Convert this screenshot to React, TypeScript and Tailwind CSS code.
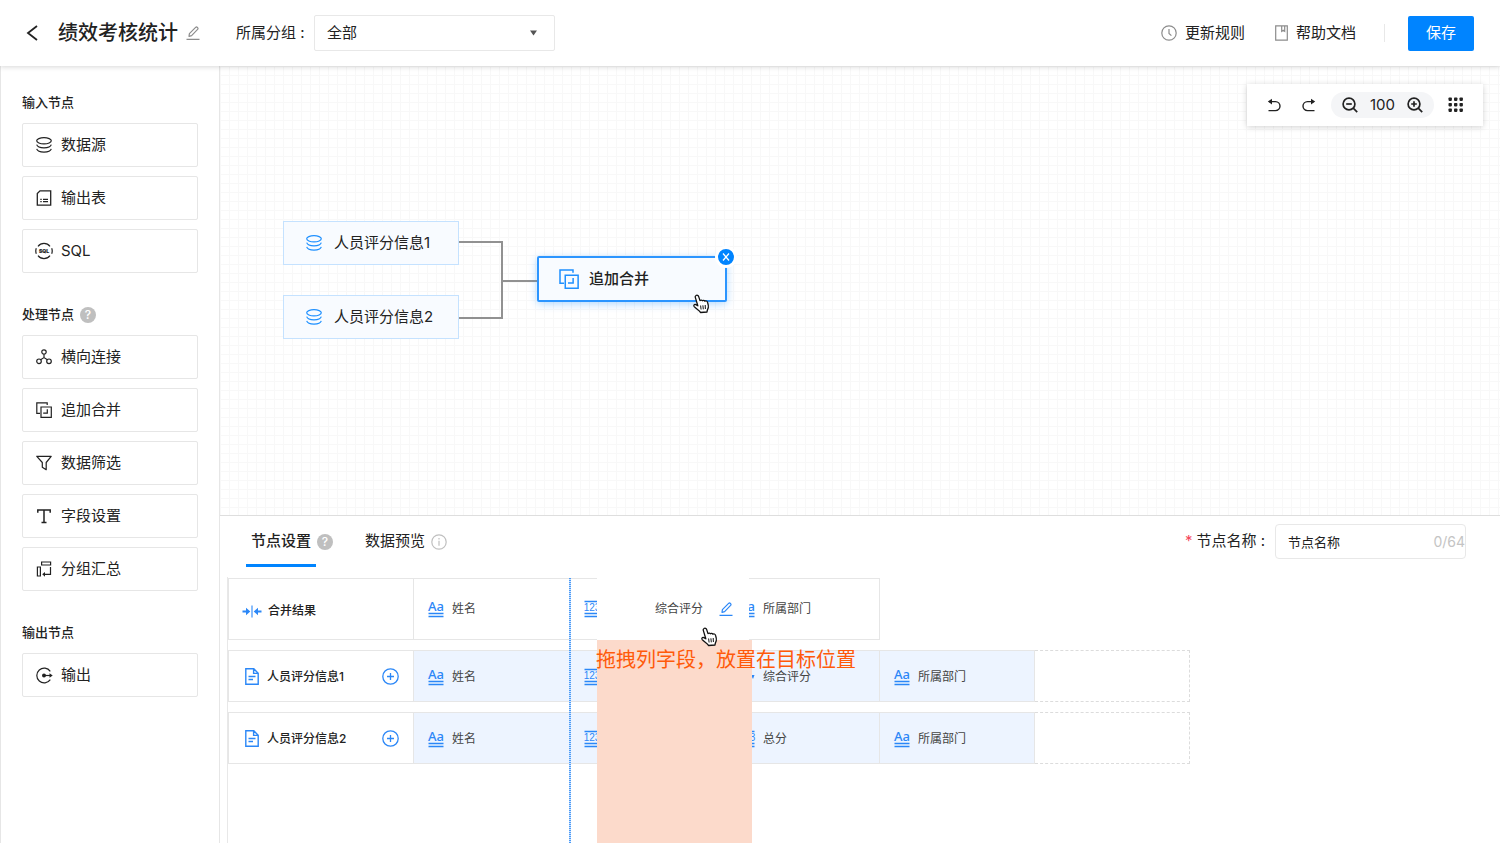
import React, { useState } from "react";

type IconProps = { className?: string };

const BackIcon = () => (
  <svg width="12" height="16" viewBox="0 0 12 16" fill="none" stroke="currentColor" strokeWidth="1.8">
    <path d="M11 1 2 8l9 7" />
  </svg>
);

const EditIcon: React.FC<IconProps> = ({ className }) => (
  <svg className={className} width="14" height="14" viewBox="0 0 14 14" fill="none" stroke="currentColor" strokeWidth="1.2">
    <path d="M.5 13.4h13M3 10.4l.4-2.8L9.6 1.4q.9-.8 1.8 0l.2.2q.8.9 0 1.8L5.6 9.7z" strokeLinejoin="round" />
  </svg>
);

const ClockIcon = () => (
  <svg width="16" height="16" viewBox="0 0 16 16" fill="none" stroke="#8c8c8c" strokeWidth="1.2">
    <circle cx="8" cy="8" r="7.2" />
    <path d="M8 4v4.4l2.4 2.2" />
  </svg>
);

const BookIcon = () => (
  <svg width="13" height="16" viewBox="0 0 13 16" fill="none" stroke="#8c8c8c" strokeWidth="1.2">
    <path d="M.7.8h11.6v14.4H.7zM6.7.8v5.600l1.500-1.100 1.500 1.100V.8" />
  </svg>
);

const DatabaseIcon = () => (
  <svg width="16" height="16" viewBox="0 0 16 16" fill="none" stroke="currentColor" strokeWidth="1.2">
    <ellipse cx="8" cy="3.8" rx="7.3" ry="3.1" />
    <path d="M.7 7.7c.6 2 3.6 3.2 7.3 3.2s6.7-1.2 7.3-3.2M.7 11.9c.6 2 3.6 3.2 7.3 3.2s6.700-1.200 7.300-3.200" />
  </svg>
);

const TableIcon = () => (
  <svg width="16" height="16" viewBox="0 0 16 16" fill="none" stroke="currentColor" strokeWidth="1.3">
    <path d="M4 .8h10.7v14.4H1.3V3.5zM4.300 9.300h1.400M7 9.300h5M4.300 11.600h1.400M7 11.600h5" />
  </svg>
);

const SqlIcon = () => (
  <svg width="18" height="18" viewBox="0 0 18 18" fill="none" stroke="currentColor" strokeWidth="1.2">
    <path d="M3 4.3a7.600 7.600 0 0 1 12 0M3 13.700a7.600 7.600 0 0 0 12 0M1.300 6.200a8 8 0 0 0 0 5.600M16.700 6.200a8 8 0 0 1 0 5.600" />
    <text x="9" y="11" textAnchor="middle" fontSize="5" fontWeight="800" fontFamily="Inter, sans-serif" fill="currentColor" strokeWidth="0.2">SQL</text>
  </svg>
);

const JoinIcon = () => (
  <svg width="16" height="16" viewBox="0 0 16 16" fill="none" stroke="currentColor" strokeWidth="1.2">
    <circle cx="8" cy="3" r="2.2" />
    <circle cx="3" cy="12.3" r="2.3" />
    <circle cx="13" cy="12.3" r="2.3" />
    <path d="M8 5.2v3.6M4.6 10.7 8 8.600l3.400 2.100" />
  </svg>
);

const MergeIcon: React.FC<{ size?: number }> = ({ size = 16 }) => (
  <svg width={size} height={size} viewBox="0 0 16 16" fill="none" stroke="currentColor" strokeWidth="1.2">
    <path d="M4 11.400H.8V.8h10.400V3" />
    <path d="M5 5h10.300v10.300H5z" />
    <path d="M11.300 7.200v4H7.200" />
  </svg>
);

const FilterIcon = () => (
  <svg width="16" height="16" viewBox="0 0 16 16" fill="none" stroke="currentColor" strokeWidth="1.2" strokeLinejoin="round">
    <path d="M.8 1.300h14.400L10.200 7.500v7.200l-3.900-2.500V7.500z" />
  </svg>
);

const FieldIcon = () => (
  <svg width="16" height="16" viewBox="0 0 16 16" fill="none" stroke="currentColor" strokeWidth="1.5">
    <path d="M1.800 4.700V1.900h12.400v2.800M8 1.900v12.600M5.500 14.500h5" />
  </svg>
);

const GroupIcon = () => (
  <svg width="16" height="16" viewBox="0 0 16 16" fill="none" stroke="currentColor" strokeWidth="1.2">
    <path d="M5.600 1h9v3h-9zM1.400 6h3v9h-3zM14.500 6v7.300H8" />
    <path d="m9 10.900-2.800 2.400L9 15.700z" fill="currentColor" stroke="none" />
  </svg>
);

const OutputIcon = () => (
  <svg width="17" height="17" viewBox="0 0 17 17" fill="none" stroke="currentColor" strokeWidth="1.2">
    <path d="M14.300 4.300a7.400 7.400 0 1 0 0 8.400" />
    <circle cx="8" cy="8.5" r="2" fill="currentColor" stroke="none" />
    <path d="M8 8.500h6" />
    <path d="m13.500 6.200 3.200 2.300-3.200 2.300z" fill="currentColor" stroke="none" />
  </svg>
);

const HelpIcon = () => (
  <span className="flex h-4 w-4 items-center justify-center rounded-full bg-[#bfbfbf] text-[12px] leading-4 font-medium text-white">?</span>
);

const InfoIcon = () => (
  <svg width="16" height="16" viewBox="0 0 16 16" fill="none" stroke="#bfbfbf" strokeWidth="1.2">
    <circle cx="8" cy="8" r="7.2" />
    <path d="M8 6.800v5M8 4v1.400" />
  </svg>
);

const UndoIcon: React.FC<IconProps> = ({ className }) => (
  <svg className={className} width="14" height="14" viewBox="0 0 14 14" fill="none" stroke="currentColor" strokeWidth="1.4">
    <path d="M2 3.600h6.500a4.500 4.500 0 0 1 0 9H1.500" />
    <path d="M5 .8v5.600L.8 3.600z" fill="currentColor" stroke="none" />
  </svg>
);

const ZoomIcon: React.FC<{ plus?: boolean }> = ({ plus }) => (
  <svg width="16" height="16" viewBox="0 0 16 16" fill="none" stroke="currentColor" strokeWidth="1.7">
    <circle cx="7" cy="7" r="5.9" />
    <path d={plus ? "M4.2 7h5.600M7 4.200v5.600" : "M4.200 7h5.600"} />
    <path d="m11.200 11.200 4 4" />
  </svg>
);

const DotsIcon = () => (
  <svg width="16" height="16" viewBox="0 0 16 16" fill="currentColor">
    {[0.5, 6, 11.5].map((y) => [0.5, 6, 11.5].map((x) => <rect key={`${x}-${y}`} x={x} y={y} width="3.4" height="3.4" rx="0.8" />))}
  </svg>
);

const MergeResultIcon = () => (
  <svg width="20" height="13" viewBox="0 0 20 13" fill="none" stroke="currentColor" strokeWidth="2">
    <path d="M.5 6.500h5M14.500 6.500h5" />
    <path d="M10 .5v12" strokeWidth="1.1" />
    <path d="M4 2.800 8.300 6.500 4 10.200zM16 2.800 11.700 6.500l4.300 3.700z" fill="currentColor" stroke="none" />
  </svg>
);

const FileIcon = () => (
  <svg width="14" height="17" viewBox="0 0 14 17" fill="none" stroke="currentColor" strokeWidth="1.4">
    <path d="M.8.8h8l4.400 4.400v11H.8zM8.600.8v4.600h4.600M3.500 8.500h7M3.500 11.500h4.500" />
  </svg>
);

const AddIcon = () => (
  <svg width="17" height="17" viewBox="0 0 17 17" fill="none" stroke="currentColor" strokeWidth="1.3">
    <circle cx="8.5" cy="8.5" r="7.7" />
    <path d="M5 8.500h7M8.500 5v7" />
  </svg>
);

const TextTypeIcon = () => (
  <svg className="shrink-0 overflow-visible" width="16" height="18" viewBox="0 0 16 18">
    <text x="8" y="11" textAnchor="middle" fontSize="13" fontWeight="500" fontFamily="'Noto Sans', sans-serif" fill="#2b87f7">Aa</text>
    <path d="M.5 13.500h15M.5 16.500h15" stroke="#2b87f7" strokeWidth="1.3" />
  </svg>
);

const NumberTypeIcon = () => (
  <svg className="shrink-0 overflow-visible" width="16" height="18" viewBox="0 0 16 18">
    <path d="M.5 1.500h15M.5 13.500h15M.5 16.500h15" stroke="#2b87f7" strokeWidth="1.3" />
    <text x="8" y="11" textAnchor="middle" fontSize="10" fontWeight="500" fontFamily="'Liberation Sans', sans-serif" fill="#2b87f7">123</text>
  </svg>
);

const FormulaTypeIcon = () => (
  <svg className="shrink-0" width="16" height="18" viewBox="0 0 16 18" fill="none" stroke="#2b87f7" strokeWidth="1.3">
    <path d="M2 4h8M2 9h8" />
    <path d="M12 7h3.500L14 11z" fill="#2b87f7" stroke="none" />
  </svg>
);

const HandCursor: React.FC<IconProps> = ({ className }) => (
  <svg className={className} width="18" height="20" viewBox="0 0 18 20" fill="#fff" stroke="#111" strokeWidth="1.3" strokeLinejoin="round">
    <path d="M4 1.500C5 .8 6.200 1.300 6.600 2.400L8 6.600c.6-.7 1.900-.8 2.400.1.800-.7 2.100-.5 2.400.5 1-.7 2.400-.2 2.700 1 .5 1.600 1.200 3.600.8 5.300-.3 1.500-1.100 2.300-1.300 4.500l-6.500.5C7.800 16.500 4.500 15 2.200 12.600c-1-1.200.2-2.600 1.600-2l2 1.200L3.300 3.400C3 2.600 3.300 1.900 4 1.500z" />
    <path d="m8.600 11.500.5 4M10.900 11.300l.4 4M13.200 11l.2 4" strokeWidth="1" />
  </svg>
);

const sections = [
  {
    title: "输入节点",
    help: false,
    items: [
      { label: "数据源", icon: <DatabaseIcon /> },
      { label: "输出表", icon: <TableIcon /> },
      { label: "SQL", icon: <SqlIcon /> },
    ],
  },
  {
    title: "处理节点",
    help: true,
    items: [
      { label: "横向连接", icon: <JoinIcon /> },
      { label: "追加合并", icon: <MergeIcon /> },
      { label: "数据筛选", icon: <FilterIcon /> },
      { label: "字段设置", icon: <FieldIcon /> },
      { label: "分组汇总", icon: <GroupIcon /> },
    ],
  },
  {
    title: "输出节点",
    help: false,
    items: [{ label: "输出", icon: <OutputIcon /> }],
  },
];

const sourceRows = [
  {
    name: "人员评分信息1",
    fields: [
      { label: "姓名", icon: <TextTypeIcon /> },
      { label: "", icon: <NumberTypeIcon /> },
      { label: "综合评分", icon: <FormulaTypeIcon /> },
      { label: "所属部门", icon: <TextTypeIcon /> },
    ],
  },
  {
    name: "人员评分信息2",
    fields: [
      { label: "姓名", icon: <TextTypeIcon /> },
      { label: "", icon: <NumberTypeIcon /> },
      { label: "总分", icon: <NumberTypeIcon /> },
      { label: "所属部门", icon: <TextTypeIcon /> },
    ],
  },
];

const resultFields = [
  { label: "姓名", icon: <TextTypeIcon /> },
  { label: "", icon: <NumberTypeIcon /> },
  { label: "所属部门", icon: <TextTypeIcon /> },
];

const Header = () => (
  <header className="relative z-10 flex h-[66px] shrink-0 items-center bg-white pr-[26px] pl-[26px] shadow-[0_1px_5px_rgba(0,0,0,0.16)]">
    <button type="button" aria-label="返回"><BackIcon /></button>
    <h1 className="ml-5 text-[20px] leading-7 font-medium">绩效考核统计</h1>
    <button type="button" aria-label="编辑名称" className="ml-2 text-[#8c8c8c]"><EditIcon /></button>
    <label htmlFor="group" className="ml-9 w-[78px] text-[15px]">所属分组 :</label>
    <div className="relative w-[241px]">
      <select id="group" className="h-9 w-full appearance-none rounded-xs border border-[#e8e8e8] bg-white px-3 text-[15px] outline-none">
        <option>全部</option>
      </select>
      <svg className="pointer-events-none absolute top-[15px] right-[18px]" width="7" height="6" viewBox="0 0 7 6" fill="#555">
        <path d="M0 .5h7L3.500 5.500z" />
      </svg>
    </div>
    <div className="ml-auto flex items-center">
      <a href="#rules" className="flex items-center gap-2 text-[15px]"><ClockIcon />更新规则</a>
      <a href="#docs" className="ml-[30px] flex items-center gap-2 text-[15px]"><BookIcon />帮助文档</a>
      <span className="ml-7 h-[18px] w-px bg-[#e8e8e8]" />
      <button type="button" className="ml-[23px] h-[35px] w-[66px] rounded-xs bg-[#0084ff] text-[15px] text-white">保存</button>
    </div>
  </header>
);

const Sidebar = () => (
  <aside className="flex w-[220px] shrink-0 flex-col gap-8 border-r border-l border-[#e6e6e6] bg-white px-[21px] pt-[27px]">
    {sections.map((section) => (
      <section key={section.title}>
        <h2 className="mb-[10px] flex h-5 items-center gap-[6px] text-[13px] font-medium">
          {section.title}
          {section.help && <HelpIcon />}
        </h2>
        <div className="flex flex-col gap-[9px]">
          {section.items.map((item) => (
            <button key={item.label} type="button"
              className="flex h-11 w-full items-center gap-2 rounded-xs border border-[#e6e6e6] bg-white pl-3 text-[15px]">
              <span className="flex w-[18px] justify-center">{item.icon}</span>
              {item.label}
            </button>
          ))}
        </div>
      </section>
    ))}
  </aside>
);

const Canvas = () => (
  <section className="relative min-h-0 flex-1 overflow-hidden bg-white bg-[linear-gradient(#f8f8f8_1px,transparent_1px),linear-gradient(90deg,#f8f8f8_1px,transparent_1px)] bg-[size:9px_9px]">
    <svg className="absolute top-0 left-0" width="400" height="300" fill="none" stroke="#919191" strokeWidth="2">
      <path d="M239 176h43v76h-43M282 215h36" />
    </svg>
    <div className="absolute top-[155px] left-[63px] flex h-11 w-44 items-center gap-3 border border-[#c5e2ff] bg-[#f8fbff] pl-[22px] text-[15px]">
      <span className="text-[#1e90ff]"><DatabaseIcon /></span>
      人员评分信息1
    </div>
    <div className="absolute top-[229px] left-[63px] flex h-11 w-44 items-center gap-3 border border-[#c5e2ff] bg-[#f8fbff] pl-[22px] text-[15px]">
      <span className="text-[#1e90ff]"><DatabaseIcon /></span>
      人员评分信息2
    </div>
    <div className="absolute top-[190px] left-[317px] flex h-[46px] w-[190px] items-center gap-[10px] rounded-xs border-2 border-[#2b95ff] bg-[#f8fbff] pl-5 text-[15px] font-medium shadow-[0_2px_8px_rgba(0,132,255,0.3)]">
      <span className="text-[#1e90ff]"><MergeIcon size={20} /></span>
      追加合并
    </div>
    <button type="button" aria-label="删除节点"
      className="absolute top-[180px] left-[495px] flex h-[22px] w-[22px] items-center justify-center rounded-full border-[3px] border-white bg-[#0084ff]">
      <svg width="8" height="8" viewBox="0 0 8 8" stroke="#fff" strokeWidth="1.3"><path d="m1 .5 6 7M7 .5l-6 7" /></svg>
    </button>
    <HandCursor className="absolute top-[228px] left-[472px]" />
    <div className="absolute top-[18px] right-[17px] flex h-[42px] w-[236px] items-center bg-white pl-5 shadow-[0_1px_6px_rgba(0,0,0,0.18)]">
      <button type="button" aria-label="撤销"><UndoIcon /></button>
      <button type="button" aria-label="重做" className="ml-[21px]"><UndoIcon className="-scale-x-100" /></button>
      <div className="ml-[15px] flex h-[26px] w-[103px] items-center justify-between rounded-full bg-[#f4f5f7] px-[11px] text-[15px]">
        <button type="button" aria-label="缩小"><ZoomIcon /></button>
        100
        <button type="button" aria-label="放大"><ZoomIcon plus /></button>
      </div>
      <button type="button" aria-label="网格" className="ml-[14px]"><DotsIcon /></button>
    </div>
  </section>
);

const NodePanel = () => {
  const [nodeName, setNodeName] = useState("节点名称");

  return (
    <section className="flex h-[328px] shrink-0 flex-col border-t border-[#dedede] bg-white">
      <div className="flex h-[51px] shrink-0 items-center justify-between pr-[34px] pl-[26px]">
        <div className="flex h-full gap-6">
          <button type="button" className="flex items-center gap-px text-[15px] font-medium">
            <span className="flex h-full items-center border-y-3 border-t-transparent border-b-[#0084ff] px-[5px]">节点设置</span>
            <HelpIcon />
          </button>
          <button type="button" className="flex items-center gap-[6px] pl-2 text-[15px]">
            数据预览
            <InfoIcon />
          </button>
        </div>
        <div className="flex items-center text-[15px]">
          <label htmlFor="node-name" className="mr-[10px]"><span className="mr-1 text-[#f5475b]">*</span>节点名称 :</label>
          <div className="relative w-[191px]">
            <input id="node-name" type="text" value={nodeName} onChange={(e) => setNodeName(e.target.value)}
              className="h-[35px] w-full rounded-sm border border-[#e8e8e8] pr-9 pl-3 text-[13px] outline-none" />
            <span className="absolute top-2 right-px text-[14px] leading-5 text-[#c4c4c4]">0/64</span>
          </div>
        </div>
      </div>

      <div className="relative mt-[10px] ml-[7px] flex-1 border-l border-[#e8e8e8]">
        <table className="-mt-[9px] w-[962px] table-fixed border-separate border-spacing-x-0 border-spacing-y-[10px] text-[12px]">
          <colgroup>
            <col className="w-[186px]" />
            <col className="w-[156px]" />
            <col span={4} className="w-[155px]" />
          </colgroup>
          <tbody>
            <tr className="h-[62px]">
              <th scope="row" className="border border-[#e6e6e6] p-0 pt-1 pl-[13px] text-left font-medium">
                <div className="flex items-center gap-[6px]">
                  <span className="text-[#2b87f7]"><MergeResultIcon /></span>
                  合并结果
                </div>
              </th>
              {resultFields.map((field, i) => (
                <td key={i} className="border-y border-r border-[#e6e6e6] p-0 pl-[14px] text-[#444]">
                  <div className="flex items-center gap-2">{field.icon}{field.label}</div>
                </td>
              ))}
            </tr>
            {sourceRows.map((row) => (
              <tr key={row.name} className="h-[52px]">
                <th scope="row" className="border border-[#e6e6e6] p-0 pt-px pr-[14px] pl-4 text-left font-medium">
                  <div className="flex items-center gap-2 text-[#2b87f7]">
                    <FileIcon />
                    <span className="text-[#222]">{row.name}</span>
                    <button type="button" aria-label="添加字段" className="ml-auto"><AddIcon /></button>
                  </div>
                </th>
                {row.fields.map((field, i) => (
                  <td key={i} className="border-y border-r border-[#e6e6e6] bg-[#edf4ff] p-0 pt-px pl-[14px] text-[#444]">
                    <div className="flex items-center gap-2">{field.icon}{field.label}</div>
                  </td>
                ))}
                <td className="border-y border-r border-dashed border-[#dcdcdc]" />
              </tr>
            ))}
          </tbody>
        </table>

        {/* drop position and the column being dragged */}
        <div className="absolute top-px bottom-0 left-[341px] w-[2px] bg-[repeating-linear-gradient(#4a9bf8_0_1px,#cfe3fd_1px_2px)]" />
        <div className="absolute top-0 bottom-0 left-[369px] flex w-[155px] flex-col">
          <div className="flex h-[63px] w-[152px] shrink-0 items-center justify-end gap-4 bg-white pr-4 text-[12px] text-[#444]">
            综合评分
            <button type="button" aria-label="编辑字段" className="text-[#2b87f7]"><EditIcon /></button>
          </div>
          <div className="flex-1 bg-[#fcdacb]" />
        </div>
        <p className="absolute top-[69px] left-[368px] text-[20px] leading-7 whitespace-nowrap text-[#ff5a0a]">拖拽列字段，放置在目标位置</p>
        <HandCursor className="absolute top-[50px] left-[472px]" />
      </div>
    </section>
  );
};

const App: React.FC = () => {
  return (
    <div className="flex h-screen flex-col overflow-hidden bg-white font-['Inter','Noto_Sans_CJK_SC',sans-serif] text-[#222]">
      <Header />
      <div className="flex min-h-0 flex-1">
        <Sidebar />
        <main className="flex min-w-0 flex-1 flex-col">
          <Canvas />
          <NodePanel />
        </main>
      </div>
    </div>
  );
};

export default App;
